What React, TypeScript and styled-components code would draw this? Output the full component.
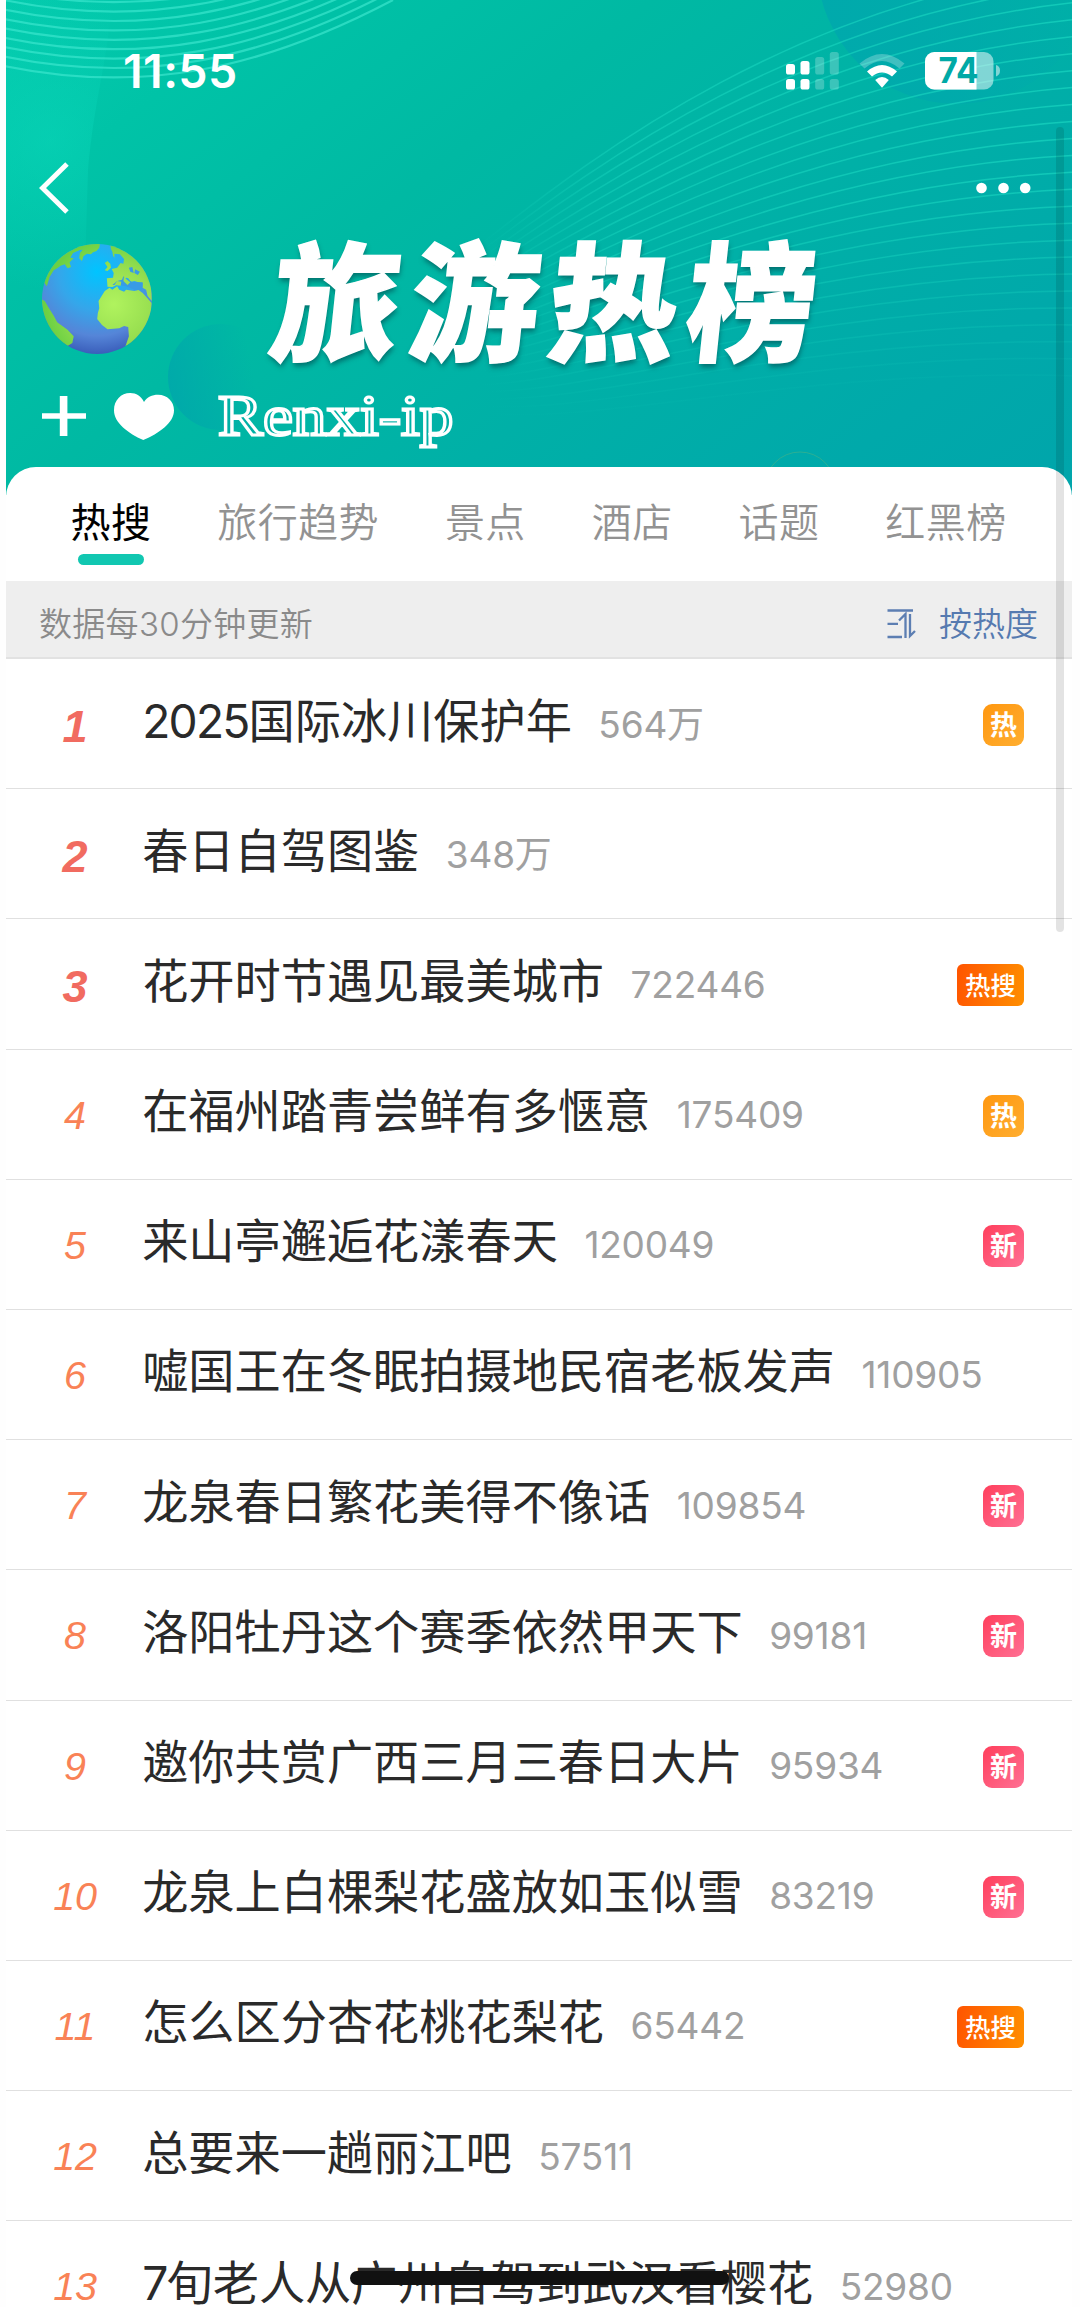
import React from "react";
import styled, { createGlobalStyle, css } from "styled-components";

const Global = createGlobalStyle`
  * { box-sizing: border-box; }
  html, body { margin: 0; padding: 0; background: #fefefe; }
  body { overflow: hidden; font-family: Inter, "Noto Sans CJK SC", sans-serif; }
`;

const Screen = styled.main`
  position: relative;
  width: 1066px;
  height: 2307px;
  margin-left: 6px;
  overflow: hidden;
  background: #fff;
`;

const Header = styled.header`
  position: relative;
  height: 495px;
  color: #fff;
  background: linear-gradient(142deg, #04cbae 0%, #00c3a7 16%, #00b9a3 38%, #00b0a7 62%, #00a9aa 84%, #00a5ab 100%);
`;

const Art = styled.svg`
  position: absolute;
  inset: 0;
  width: 1066px;
  height: 495px;
`;

const StatusBar = styled.div`
  position: relative;
  display: flex;
  align-items: center;
  height: 142px;
  padding: 0 71px 0 117px;
`;

const Clock = styled.div`
  flex: 1;
  font-size: 46.5px;
  font-weight: 600;
  letter-spacing: 0.4px;
  line-height: 46px;
`;

const StatusIcons = styled.svg`
  width: 216px;
  height: 40px;
  overflow: visible;
`;

const NavBar = styled.div`
  position: relative;
  display: flex;
  align-items: center;
  justify-content: space-between;
  height: 92px;
  padding: 0 41.5px 0 33px;
`;

const Icon = styled.svg<{ $w: number; $h: number }>`
  flex: none;
  display: block;
  width: ${(p) => p.$w}px;
  height: ${(p) => p.$h}px;
`;

const HeartIcon = styled(Icon)`
  margin-left: 28px;
`;

const Banner = styled.div`
  position: relative;
  display: flex;
  align-items: center;
  height: 130px;
  padding-left: 36px;
`;

const BannerTitle = styled.h1`
  margin: -9px 0 0 121px;
  font-family: "Noto Sans CJK SC", sans-serif;
  font-size: 129px;
  font-weight: 900;
  line-height: 130px;
  letter-spacing: 9.5px;
  white-space: nowrap;
  transform: skewX(-6deg);
  -webkit-text-stroke: 1.5px #fff;
  text-shadow: 1px 4px 5px rgba(0, 70, 75, 0.6);
`;

const Profile = styled.div`
  position: relative;
  display: flex;
  align-items: center;
  height: 104px;
  padding: 0 0 0 36px;
`;

const Handle = styled.div`
  margin-left: 44px;
  font-family: "Liberation Serif", serif;
  font-size: 58px;
  line-height: 60px;
  color: #00b0a6;
  white-space: nowrap;
  transform: scaleX(1.16);
  transform-origin: left;
  -webkit-text-stroke: 2.9px #fff;
`;

const Sheet = styled.section`
  position: relative;
  margin-top: -28px;
  border-radius: 30px 30px 0 0;
  background: #fff;
`;

const Tabs = styled.nav`
  display: flex;
  gap: 66px;
  height: 114px;
  padding: 30.5px 0 0 64.5px;
`;

const Tab = styled.div<{ $active?: boolean }>`
  display: flex;
  flex-direction: column;
  align-items: center;
  font-size: 40px;
  font-weight: ${(p) => (p.$active ? 400 : 350)};
  line-height: 50px;
  letter-spacing: 0.4px;
  white-space: nowrap;
  color: ${(p) => (p.$active ? "#000" : "#929292")};
  ${(p) =>
    p.$active &&
    css`
      &::after {
        content: "";
        width: 66px;
        height: 11px;
        margin: 6.5px 0 0 1px;
        border-radius: 6px;
        background: #11c7b1;
      }
    `}
`;

const InfoBar = styled.div`
  display: flex;
  align-items: center;
  height: 78px;
  padding: 10px 34px 0 33px;
  border-bottom: 2px solid #e2e2e2;
  background: #eee;
  color: #8a8a8a;
  font-size: 33px;
  font-weight: 350;
  line-height: 40px;
`;

const Note = styled.div`
  flex: 1;
  letter-spacing: 0.3px;
`;

const Sort = styled.div`
  display: flex;
  align-items: center;
  gap: 23px;
  color: #567ab0;
`;

const List = styled.ol`
  margin: 0;
  padding: 0;
  list-style: none;
`;

const Row = styled.li`
  display: flex;
  align-items: flex-start;
  height: 130.2px;
  padding-right: 48px;
  border-bottom: 1px solid #e0e0e0;
`;

const Rank = styled.div<{ $top: boolean }>`
  flex: none;
  width: 136.2px;
  padding: ${(p) => (p.$top ? 48 : 45)}px 0 0 2px;
  text-align: center;
  font-family: "Liberation Sans", Arial, sans-serif;
  font-style: italic;
  font-size: ${(p) => (p.$top ? 45 : 39.5)}px;
  font-weight: ${(p) => (p.$top ? 700 : 400)};
  line-height: 40px;
  color: ${(p) => (p.$top ? "#f16b60" : "#f98256")};
`;

const Headline = styled.div`
  flex: 1;
  display: flex;
  align-items: baseline;
  padding-top: 37.5px;
  font-size: 46.2px;
  line-height: 48px;
  white-space: nowrap;
  color: #2a2a2a;
`;

const Digits = styled.span`
  letter-spacing: -1.8px;
`;

const Count = styled.span`
  margin-left: 26.5px;
  font-size: 37px;
  letter-spacing: -0.2px;
  line-height: 40px;
  color: #a0a0a0;
`;

type BadgeKind = "hot" | "search" | "new";

const badgeFill: Record<BadgeKind, string> = {
  hot: "linear-gradient(135deg, #ff9710, #ffae30)",
  search: "linear-gradient(100deg, #ff5400, #ff8f00)",
  new: "linear-gradient(135deg, #ff3f5c, #ff7094)",
};

const Badge = styled.span<{ $kind: BadgeKind }>`
  flex: none;
  width: ${(p) => (p.$kind === "search" ? 67 : 41)}px;
  height: 42px;
  margin-top: 45px;
  border-radius: ${(p) => (p.$kind === "search" ? 6 : 9)}px;
  background: ${(p) => badgeFill[p.$kind]};
  color: #fff;
  text-align: center;
  font-size: ${(p) => (p.$kind === "search" ? 25.5 : 27)}px;
  font-weight: ${(p) => (p.$kind === "search" ? 500 : 700)};
  line-height: 43px;
`;

const ScrollThumb = styled.div`
  position: absolute;
  left: 1049.5px;
  top: 127px;
  width: 8.5px;
  height: 805px;
  border-radius: 5px;
  background: rgba(0, 0, 0, 0.11);
`;

const HomeIndicator = styled.div`
  position: absolute;
  left: 344px;
  top: 2271px;
  width: 379px;
  height: 14px;
  border-radius: 7px;
  background: #111;
`;

const tabs = ["热搜", "旅行趋势", "景点", "酒店", "话题", "红黑榜"];

const items: { title: string; count: string; badge?: BadgeKind }[] = [
  { title: "2025国际冰川保护年", count: "564万", badge: "hot" },
  { title: "春日自驾图鉴", count: "348万" },
  { title: "花开时节遇见最美城市", count: "722446", badge: "search" },
  { title: "在福州踏青尝鲜有多惬意", count: "175409", badge: "hot" },
  { title: "来山亭邂逅花漾春天", count: "120049", badge: "new" },
  { title: "嘘国王在冬眠拍摄地民宿老板发声", count: "110905" },
  { title: "龙泉春日繁花美得不像话", count: "109854", badge: "new" },
  { title: "洛阳牡丹这个赛季依然甲天下", count: "99181", badge: "new" },
  { title: "邀你共赏广西三月三春日大片", count: "95934", badge: "new" },
  { title: "龙泉上白棵梨花盛放如玉似雪", count: "83219", badge: "new" },
  { title: "怎么区分杏花桃花梨花", count: "65442", badge: "search" },
  { title: "总要来一趟丽江吧", count: "57511" },
  { title: "7旬老人从广州自驾到武汉看樱花", count: "52980" },
];

const badgeText: Record<BadgeKind, string> = { hot: "热", search: "热搜", new: "新" };

const HeaderArt = () => (
  <Art viewBox="6 0 1066 495">
    <defs>
      <linearGradient id="orbTop" x1="0" x2="1" y1="0" y2="0">
        <stop offset="0" stopColor="#00a8ad" stopOpacity=".9" />
        <stop offset=".5" stopColor="#00a8ad" stopOpacity=".65" />
        <stop offset="1" stopColor="#00a8ad" stopOpacity="0" />
      </linearGradient>
      <linearGradient id="orbLow" x1="0" x2="1" y1=".6" y2=".4">
        <stop offset="0" stopColor="#00a3ad" stopOpacity=".7" />
        <stop offset=".8" stopColor="#00a3ad" stopOpacity="0" />
      </linearGradient>
      <radialGradient id="glow" gradientUnits="userSpaceOnUse" cx="50" cy="140" r="150">
        <stop offset="0" stopColor="#0ad8bb" stopOpacity=".5" />
        <stop offset="1" stopColor="#0ad8bb" stopOpacity="0" />
      </radialGradient>
      <linearGradient id="wave" x1="0" x2="1" y1="0" y2="0">
        <stop offset="0" stopColor="#1ddcc4" stopOpacity="0" />
        <stop offset=".25" stopColor="#1ddcc4" stopOpacity=".45" />
        <stop offset="1" stopColor="#1ddcc4" stopOpacity=".6" />
      </linearGradient>
    </defs>
    <path d="M6 0H112C108 60 94 100 88 170L84 300H6Z" fill="url(#glow)" />
    <circle cx="957" cy="-36" r="140" fill="url(#orbTop)" />
    <circle cx="221" cy="377" r="53" fill="url(#orbLow)" />
    {Array.from({ length: 9 }, (_, i) => (
      <path
        key={i}
        d={`M0 ${65 - 9.4 * i}C140 ${95 - 9.4 * i} 260 ${70 - 9.4 * i} 393 ${-9.4 * i}`}
        fill="none"
        stroke="#3be6cd"
        strokeOpacity=".7"
        strokeWidth="2.2"
      />
    ))}
    {Array.from({ length: 25 }, (_, k) => (
      <path
        key={k}
        d={`M480 ${245 + 7 * k}C600 ${150 + 11.5 * k} 800 ${15.3 * k} 1080 ${-32 + 17 * k}`}
        fill="none"
        stroke="url(#wave)"
        strokeOpacity={k < 12 ? 1 : Math.max(0.1, 1 - (k - 12) * 0.075)}
        strokeWidth="1.5"
      />
    ))}
    <circle cx="800" cy="487" r="35" fill="none" stroke="#58b37e" strokeOpacity=".5" />
  </Art>
);

const DeviceIcons = () => (
  <StatusIcons viewBox="785 51 216 40">
    <g fill="#fff">
      <rect x="786" y="64" width="9" height="10.5" rx="2.6" />
      <rect x="786" y="79" width="9" height="10.5" rx="2.6" />
      <rect x="800.5" y="61" width="9" height="13.5" rx="2.6" />
      <rect x="800.5" y="79" width="9" height="10.5" rx="2.6" />
      <g opacity=".23">
        <rect x="815.2" y="57" width="9" height="17.5" rx="2.6" />
        <rect x="815.2" y="79" width="9" height="10.5" rx="2.6" />
        <rect x="829.8" y="52" width="9" height="22.5" rx="2.6" />
        <rect x="829.8" y="79" width="9" height="10.5" rx="2.6" />
      </g>
      <path d="M859.5 63.5Q882 44.5 904.5 63.5L899.5 68.5Q882 53.5 864.5 68.5Z" opacity=".25" />
      <path d="M867 71.5Q882 58.5 897 71.5L892 76.5Q882 68.5 872 76.5Z" />
      <path d="M875.2 80Q882 74 888.8 80L882 87.8Z" />
    </g>
    <rect x="925" y="52" width="68.5" height="37.5" rx="9.5" fill="#fff" opacity=".5" />
    <path d="M976.5 52H934.5A9.5 9.5 0 0 0 925 61.5V80A9.5 9.5 0 0 0 934.5 89.5H976.5Z" fill="#fff" />
    <path d="M996 65Q1000 66 1000 70.5Q1000 75 996 76.5Z" fill="#fff" opacity=".5" />
    <text x="938.5" y="83.3" fontFamily="Inter, sans-serif" fontSize="35" fontWeight="700" textLength="40" lengthAdjust="spacingAndGlyphs" fill="#00a9a6">
      74
    </text>
  </StatusIcons>
);

const Globe = () => (
  <Icon $w={110} $h={110} viewBox="122 69 319 330" preserveAspectRatio="none">
    <defs>
      <radialGradient id="sea" cx=".5" cy=".25" r=".78">
        <stop offset="0" stopColor="#00c4ff" />
        <stop offset=".45" stopColor="#35a6ea" />
        <stop offset=".75" stopColor="#5585d8" />
        <stop offset="1" stopColor="#3557b5" />
      </radialGradient>
      <radialGradient id="land" gradientUnits="userSpaceOnUse" cx="330" cy="250" r="200">
        <stop offset="0" stopColor="#b0f35e" />
        <stop offset=".55" stopColor="#98df50" />
        <stop offset="1" stopColor="#6cd043" />
      </radialGradient>
      <clipPath id="disc">
        <ellipse cx="281.5" cy="234" rx="159.5" ry="165" />
      </clipPath>
    </defs>
    <g clipPath="url(#disc)">
      <rect x="122" y="69" width="319" height="330" fill="url(#sea)" />
      <g fill="url(#land)">
        <path d="M304 210L318 200L326 206L340 196L346 206L360 212L366 206L390 210L402 207L414 216L440 246V300L420 345L364 376L374 346L372 318L360 315L346 322L312 325L296 312L282 294L284 276L288 262L286 240Z" />
        <path d="M320 69L440 100V240L428 224L424 206L414 200L414 186L402 184L390 180L380 182L372 172L366 170L360 176L350 180L334 194L326 198L312 197L310 172L328 170L330 156L324 144L340 140L350 126L358 128L360 114L348 100L332 98L332 110L328 104L326 92L322 84Z" />
        <path d="M220 69L290 69L288 80L280 90L270 94L264 100L252 98L242 106L238 120L230 112L232 96L240 86L222 88Z" />
        <path d="M125 180V140L180 75L236 77L230 88L212 96L204 110L214 112L202 124L206 138L196 142L188 130L176 134L166 142L156 148L144 168L136 196Z" />
        <path d="M120 234L130 240L140 258L156 284L166 304L196 326L214 346L210 366L196 375L120 320Z" />
        <path d="M304 126L312 120L320 128L322 140L312 150L304 148L312 138Z" />
      </g>
      <g fill="#399be5">
        <path d="M326 192L340 180L354 176L358 166L366 174L384 184L414 184L412 206L390 206L366 196L346 192Z" />
        <path d="M374 140L384 138L388 156L378 152Z M392 145L406 152L400 162L390 156Z" />
      </g>
      <path d="M332 192L340 180L352 182L350 194Z M360 166L366 174L378 184L370 192L358 180Z" fill="#9de052" />
    </g>
  </Icon>
);

const renderTitle = (t: string) =>
  t.split(/(\d+)/).map((part, i) => (/^\d+$/.test(part) ? <Digits key={i}>{part}</Digits> : part));

export default function App() {
  return (
    <>
      <Global />
      <Screen>
        <Header>
          <HeaderArt />
          <StatusBar>
            <Clock>11:55</Clock>
            <DeviceIcons />
          </StatusBar>
          <NavBar>
            <Icon $w={30} $h={52} viewBox="39 162.5 30 52">
              <path d="M67 164.5L42.5 188.5L67 212.5" fill="none" stroke="#fff" strokeWidth="5" />
            </Icon>
            <Icon $w={55} $h={12} viewBox="975.5 182 55 12" fill="#fff">
              <circle cx="981" cy="188" r="5.3" />
              <circle cx="1003" cy="188" r="5.3" />
              <circle cx="1024.7" cy="188" r="5.3" />
            </Icon>
          </NavBar>
          <Banner>
            <Globe />
            <BannerTitle>旅游热榜</BannerTitle>
          </Banner>
          <Profile>
            <Icon $w={44} $h={40} viewBox="0 0 44 40" fill="#fff">
              <path d="M17.8 0H25.4V17.3H44V22.8H25.4V40H17.8V22.8H0V17.3H17.8Z" />
            </Icon>
            <HeartIcon $w={60} $h={47} viewBox="330 523 174 142" preserveAspectRatio="none" fill="#fff">
              <path d="M417 550C408 532 395 523 377 523C350 523 330 545 330 575C330 614 372 645 415 665C460 645 504 614 504 575C504 548 484 528 458 528C440 528 426 535 417 550Z" />
            </HeartIcon>
            <Handle>Renxi-ip</Handle>
          </Profile>
        </Header>
        <Sheet>
          <Tabs>
            {tabs.map((t, i) => (
              <Tab key={t} $active={i === 0}>
                {t}
              </Tab>
            ))}
          </Tabs>
          <InfoBar>
            <Note>数据每30分钟更新</Note>
            <Sort>
              <Icon $w={29} $h={30} viewBox="0 0 29 30" fill="none" stroke="#5c7eb2" strokeWidth="2.3">
                <path d="M0.5 1.5H26M0.5 14.8H11M0.5 28H15" />
                <path d="M12 11.5L18.5 5V29M23 5V27L28 22" />
              </Icon>
              按热度
            </Sort>
          </InfoBar>
          <List>
            {items.map((it, i) => (
              <Row key={it.title}>
                <Rank $top={i < 3}>{i + 1}</Rank>
                <Headline>
                  {renderTitle(it.title)}
                  <Count>{it.count}</Count>
                </Headline>
                {it.badge && <Badge $kind={it.badge}>{badgeText[it.badge]}</Badge>}
              </Row>
            ))}
          </List>
        </Sheet>
        <ScrollThumb />
        <HomeIndicator />
      </Screen>
    </>
  );
}
